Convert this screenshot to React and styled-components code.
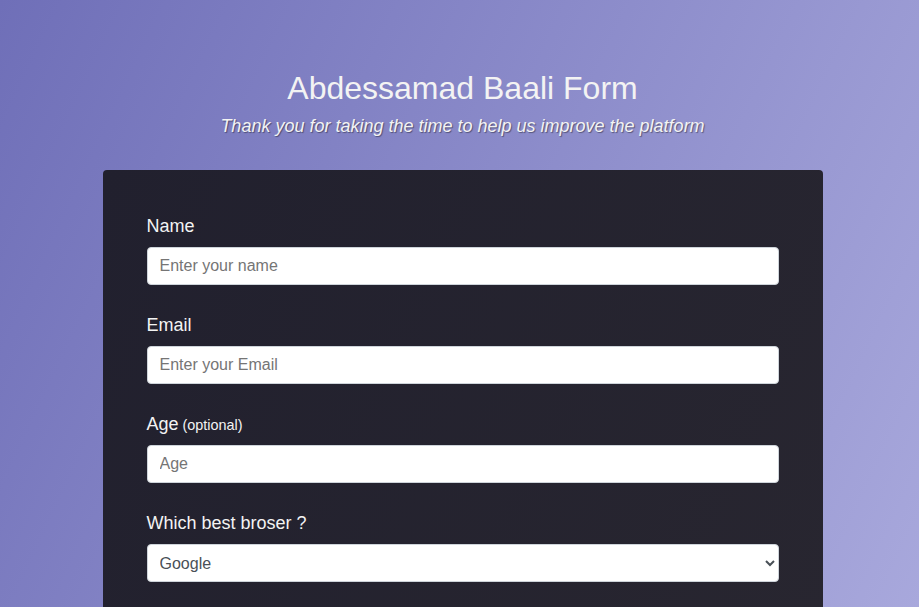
import React from "react";
import styled, { createGlobalStyle } from "styled-components";

const Global = createGlobalStyle`
  html, body { margin: 0; padding: 0; }
  body {
    font-family: "Liberation Sans", Arial, sans-serif;
    font-size: 16px;
    line-height: 1.4;
    color: #f3f3f3;
    background: linear-gradient(115deg, #6f6fb8 0%, #a8a8dc 100%);
    background-attachment: fixed;
    min-height: 100vh;
  }
  * { box-sizing: border-box; }
`;

const Page = styled.div`
  padding: 69px 0 50px 6px;
`;

const Header = styled.header`
  text-align: center;
  margin-bottom: 30px;
`;

const Title = styled.h1`
  margin: 0;
  font-size: 32px;
  line-height: 1.2;
  font-weight: 400;
`;

const Description = styled.p`
  margin: 7px 0 0;
  font-size: 18px;
  line-height: 1.4;
  font-style: italic;
  font-weight: 400;
  text-shadow: 1px 1px 1px rgba(0, 0, 0, 0.4);
`;

const Card = styled.form`
  width: 720px;
  margin: 0 auto;
  padding: 40px;
  border-radius: 4px;
  background: linear-gradient(115deg, #21202e 0%, #282630 100%);
`;

const Group = styled.div`
  padding: 4px;
  margin-bottom: 20px;
`;

const Label = styled.label`
  display: flex;
  align-items: baseline;
  gap: 4px;
  font-size: 18px;
  line-height: 1.4;
  margin-bottom: 8px;
`;

const Clue = styled.span`
  font-size: 14.4px;
`;

const Input = styled.input`
  display: block;
  width: 100%;
  height: 38px;
  padding: 6px 12px;
  font-family: "Liberation Sans", Arial, sans-serif;
  font-size: 16px;
  line-height: 1.5;
  color: #495057;
  background: #fff;
  border: 1px solid #ced4da;
  border-radius: 4px;
  outline: none;
  &::placeholder { color: #757575; }
`;

const Select = styled.select`
  display: block;
  width: 100%;
  height: 38px;
  padding: 6px 8px;
  font-family: "Liberation Sans", Arial, sans-serif;
  font-size: 16px;
  color: #495057;
  background: #fff;
  border: 1px solid #ced4da;
  border-radius: 4px;
  outline: none;
`;

export default function App() {
  return (
    <>
      <Global />
      <Page>
        <Header>
          <Title>Abdessamad Baali Form</Title>
          <Description>Thank you for taking the time to help us improve the platform</Description>
        </Header>
        <Card onSubmit={(e) => e.preventDefault()}>
          <Group>
            <Label htmlFor="name">Name</Label>
            <Input id="name" type="text" placeholder="Enter your name" />
          </Group>
          <Group>
            <Label htmlFor="email">Email</Label>
            <Input id="email" type="email" placeholder="Enter your Email" />
          </Group>
          <Group>
            <Label htmlFor="age">Age <Clue>(optional)</Clue></Label>
            <Input id="age" type="number" placeholder="Age" />
          </Group>
          <Group>
            <Label htmlFor="browser">Which best broser ?</Label>
            <Select id="browser" defaultValue="google">
              <option value="google">Google</option>
              <option value="firefox">Firefox</option>
              <option value="edge">Edge</option>
            </Select>
          </Group>
        </Card>
      </Page>
    </>
  );
}
